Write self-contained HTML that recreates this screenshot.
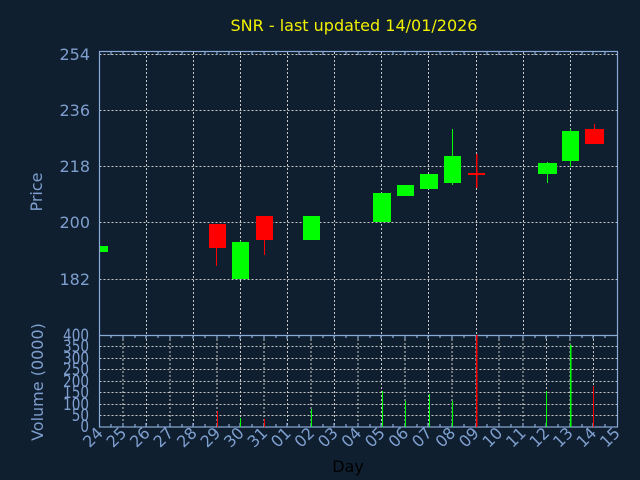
<!DOCTYPE html>
<html><head><meta charset="utf-8"><style>
html,body{margin:0;padding:0;background:#0f1f30;}
svg{display:block;font-family:"DejaVu Sans","Liberation Sans",sans-serif;}
</style></head><body>
<svg width="640" height="480" viewBox="0 0 640 480" xmlns="http://www.w3.org/2000/svg">
<rect width="640" height="480" fill="#0f1f30"/>
<text x="354" y="31" font-size="16" fill="#f0f000" text-anchor="middle">SNR - last updated 14/01/2026</text>
<g stroke="#c8c8c8" stroke-width="1" stroke-dasharray="2,2" fill="none">
<path d="M99.5 54.5H617M99.5 110.5H617M99.5 166.5H617M99.5 222.5H617M99.5 279.5H617"/>
<path d="M146.5 52V335M193.5 52V335M240.5 52V335M287.5 52V335M334.5 52V335M381.5 52V335M428.5 52V335M476.5 52V335M523.5 52V335M570.5 52V335"/>
<path d="M99.5 346.5H617M99.5 358.5H617M99.5 369.5H617M99.5 381.5H617M99.5 392.5H617M99.5 404.5H617M99.5 415.5H617"/>
<path d="M123 335V427M146.5 335V427M170 335V427M193.5 335V427M217 335V427M240.5 335V427M264 335V427M287.5 335V427M311 335V427M334.5 335V427M358 335V427M381.5 335V427M405 335V427M428.5 335V427M452 335V427M476 335V427M499 335V427M523 335V427M546.5 335V427M570 335V427M593.5 335V427"/>
</g>
<g stroke="#8aaad8" stroke-width="1.2" fill="none">
<rect x="99.5" y="51.5" width="518" height="375.5"/>
<path d="M99.5 335.5H617.5"/>
<path d="M111 52v3M123 52v3M135 52v3M158 52v3M170 52v3M182 52v3M205 52v3M217 52v3M229 52v3M252 52v3M264 52v3M276 52v3M299 52v3M311 52v3M323 52v3M346 52v3M358 52v3M370 52v3M393 52v3M405 52v3M417 52v3M440 52v3M452 52v3M464 52v3M487 52v3M499 52v3M511 52v3M535 52v3M546 52v3M558 52v3M582 52v3M593 52v3M605 52v3"/>
<path d="M111 335v3M123 335v4M135 335v3M146 335v4M158 335v3M170 335v4M182 335v3M193 335v4M205 335v3M217 335v4M229 335v3M240 335v4M252 335v3M264 335v4M276 335v3M287 335v4M299 335v3M311 335v4M323 335v3M334 335v4M346 335v3M358 335v4M370 335v3M381 335v4M393 335v3M405 335v4M417 335v3M428 335v4M440 335v3M452 335v4M464 335v3M476 335v4M487 335v3M499 335v4M511 335v3M523 335v4M535 335v3M546 335v4M558 335v3M570 335v4M582 335v3M593 335v4M605 335v3"/>
<path d="M111 427v-3M123 427v-4M135 427v-3M146 427v-4M158 427v-3M170 427v-4M182 427v-3M193 427v-4M205 427v-3M217 427v-4M229 427v-3M240 427v-4M252 427v-3M264 427v-4M276 427v-3M287 427v-4M299 427v-3M311 427v-4M323 427v-3M334 427v-4M346 427v-3M358 427v-4M370 427v-3M381 427v-4M393 427v-3M405 427v-4M417 427v-3M428 427v-4M440 427v-3M452 427v-4M464 427v-3M476 427v-4M487 427v-3M499 427v-4M511 427v-3M523 427v-4M535 427v-3M546 427v-4M558 427v-3M570 427v-4M582 427v-3M593 427v-4M605 427v-3"/>
</g>
<g font-size="16" fill="#7f9fcf" text-anchor="end">
<text x="90" y="60">254</text><text x="90" y="116">236</text><text x="90" y="172">218</text><text x="90" y="228">200</text><text x="90" y="285">182</text>
</g>
<g font-size="17" fill="#7f9fcf" text-anchor="end" transform="translate(89,0) scale(0.8,1)">
<text x="0" y="341">400</text><text x="0" y="352">350</text><text x="0" y="364">300</text><text x="0" y="375">250</text><text x="0" y="387">200</text><text x="0" y="398">150</text><text x="0" y="410">100</text><text x="0" y="421">50</text><text x="0" y="432">0</text>
</g>
<text transform="translate(42,192) rotate(-90)" font-size="16" fill="#7f9fcf" text-anchor="middle">Price</text>
<text transform="translate(43,382) rotate(-90)" font-size="16" fill="#7f9fcf" text-anchor="middle">Volume (0000)</text>
<text x="348" y="472" font-size="16" fill="#000" text-anchor="middle">Day</text>
<g font-size="16" fill="#7f9fcf" text-anchor="end">
<text transform="translate(104,434) rotate(-45)">24</text>
<text transform="translate(127.5,434) rotate(-45)">25</text>
<text transform="translate(151,434) rotate(-45)">26</text>
<text transform="translate(174.5,434) rotate(-45)">27</text>
<text transform="translate(198,434) rotate(-45)">28</text>
<text transform="translate(221.5,434) rotate(-45)">29</text>
<text transform="translate(245,434) rotate(-45)">30</text>
<text transform="translate(268.5,434) rotate(-45)">31</text>
<text transform="translate(292,434) rotate(-45)">01</text>
<text transform="translate(315.5,434) rotate(-45)">02</text>
<text transform="translate(339,434) rotate(-45)">03</text>
<text transform="translate(362.5,434) rotate(-45)">04</text>
<text transform="translate(386,434) rotate(-45)">05</text>
<text transform="translate(409.5,434) rotate(-45)">06</text>
<text transform="translate(433,434) rotate(-45)">07</text>
<text transform="translate(456.5,434) rotate(-45)">08</text>
<text transform="translate(480,434) rotate(-45)">09</text>
<text transform="translate(503.5,434) rotate(-45)">10</text>
<text transform="translate(527,434) rotate(-45)">11</text>
<text transform="translate(550.5,434) rotate(-45)">12</text>
<text transform="translate(574,434) rotate(-45)">13</text>
<text transform="translate(597.5,434) rotate(-45)">14</text>
<text transform="translate(621,434) rotate(-45)">15</text>
</g>
<g>
<rect x="100" y="246" width="8" height="6" fill="#00ff00"/>
<rect x="216" y="247" width="1" height="19" fill="#ff0000"/><rect x="209" y="224" width="17" height="24" fill="#ff0000"/>
<rect x="240" y="241" width="1" height="3" fill="#00ff00"/><rect x="232" y="242" width="17" height="37" fill="#00ff00"/>
<rect x="264" y="239" width="1" height="16" fill="#ff0000"/><rect x="256" y="216" width="17" height="24" fill="#ff0000"/>
<rect x="303" y="216" width="17" height="24" fill="#00ff00"/>
<rect x="373" y="193" width="18" height="29" fill="#00ff00"/>
<rect x="397" y="185" width="17" height="11" fill="#00ff00"/>
<rect x="420" y="174" width="18" height="15" fill="#00ff00"/>
<rect x="452" y="129" width="1" height="56" fill="#00ff00"/><rect x="444" y="156" width="17" height="27" fill="#00ff00"/>
<rect x="476" y="154" width="1.5" height="34" fill="#ff0000"/><rect x="468" y="173" width="17" height="2" fill="#ff0000"/>
<rect x="547" y="162" width="1" height="21" fill="#00ff00"/><rect x="538" y="163" width="19" height="11" fill="#00ff00"/>
<rect x="570" y="129" width="1" height="38" fill="#00ff00"/><rect x="562" y="131" width="17" height="30" fill="#00ff00"/>
<rect x="594" y="124" width="1" height="6" fill="#ff0000"/><rect x="585" y="129" width="19" height="15" fill="#ff0000"/>
</g>
<g>
<rect x="217" y="411" width="1" height="16" fill="#ff0000"/>
<rect x="240" y="418" width="1" height="9" fill="#00ff00"/>
<rect x="264" y="419" width="1" height="8" fill="#ff0000"/>
<rect x="311" y="409" width="1" height="18" fill="#00ff00"/>
<rect x="382" y="391" width="1" height="36" fill="#00ff00"/>
<rect x="405" y="401" width="1" height="26" fill="#00ff00"/>
<rect x="429" y="394" width="1" height="33" fill="#00ff00"/>
<rect x="452" y="401" width="1" height="26" fill="#00ff00"/>
<rect x="476" y="335" width="1.5" height="92" fill="#ff0000"/>
<rect x="546" y="391" width="1" height="36" fill="#00ff00"/>
<rect x="570" y="345" width="1.5" height="82" fill="#00ff00"/>
<rect x="593" y="386" width="1" height="41" fill="#ff0000"/>
</g>
</svg>
</body></html>
